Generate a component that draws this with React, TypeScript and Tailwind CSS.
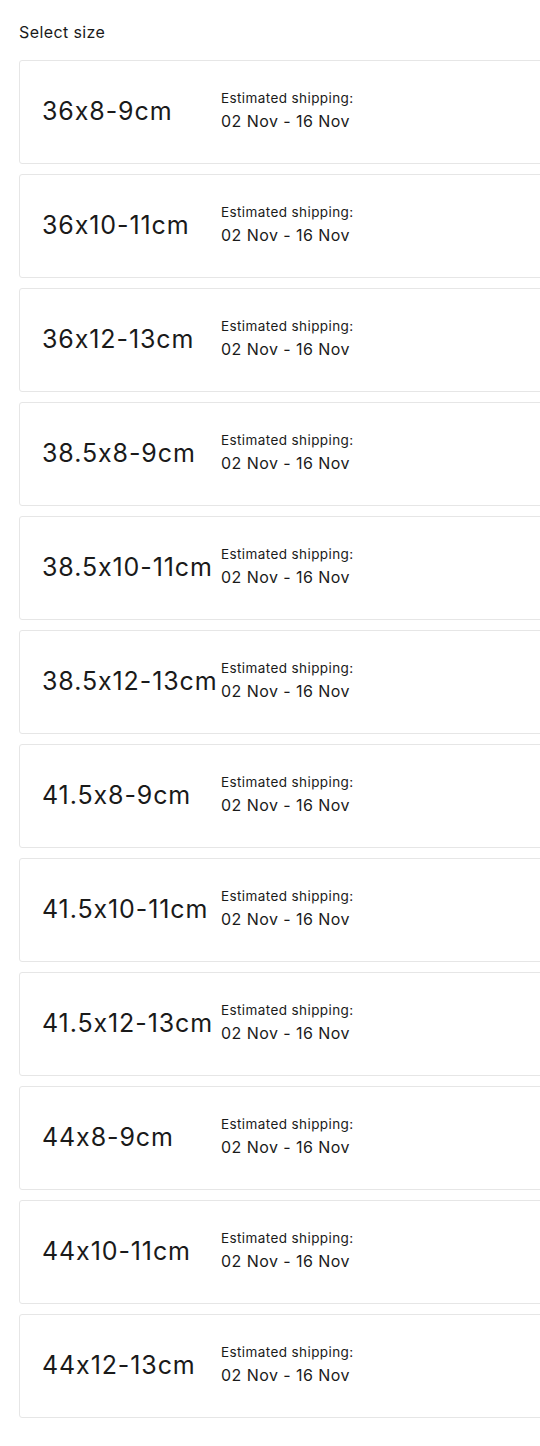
const sizes = [
  "36x8-9cm",
  "36x10-11cm",
  "36x12-13cm",
  "38.5x8-9cm",
  "38.5x10-11cm",
  "38.5x12-13cm",
  "41.5x8-9cm",
  "41.5x10-11cm",
  "41.5x12-13cm",
  "44x8-9cm",
  "44x10-11cm",
  "44x12-13cm",
];

export default function App() {
  return (
    <div
      className="w-[540px] h-[1446px] overflow-hidden bg-white text-[#1a1a1a]"
      style={{ fontFamily: "Inter, 'Noto Sans', sans-serif" }}
    >
      <div className="pl-[19px] pt-[22px]">
        <p className="text-[16px] leading-[20px] tracking-[0.4px] mb-[18px]">Select size</p>
        <div className="flex flex-col gap-[10px]">
          {sizes.map((size) => (
            <div
              key={size}
              className="w-[560px] h-[104px] shrink-0 border border-[#e6e6e6] rounded-[3px] flex items-center pl-[22px]"
            >
              <span className="w-[179px] shrink-0 whitespace-nowrap text-[25px] leading-[30px] tracking-[0.9px] mb-[3px]">
                {size}
              </span>
              <div className="flex flex-col mb-[4px]">
                <span className="text-[13.5px] leading-[18px] tracking-[0.4px]">Estimated shipping:</span>
                <span className="text-[16px] leading-[22px] mt-[3px] tracking-[0.45px]">02 Nov - 16 Nov</span>
              </div>
            </div>
          ))}
        </div>
      </div>
    </div>
  );
}
